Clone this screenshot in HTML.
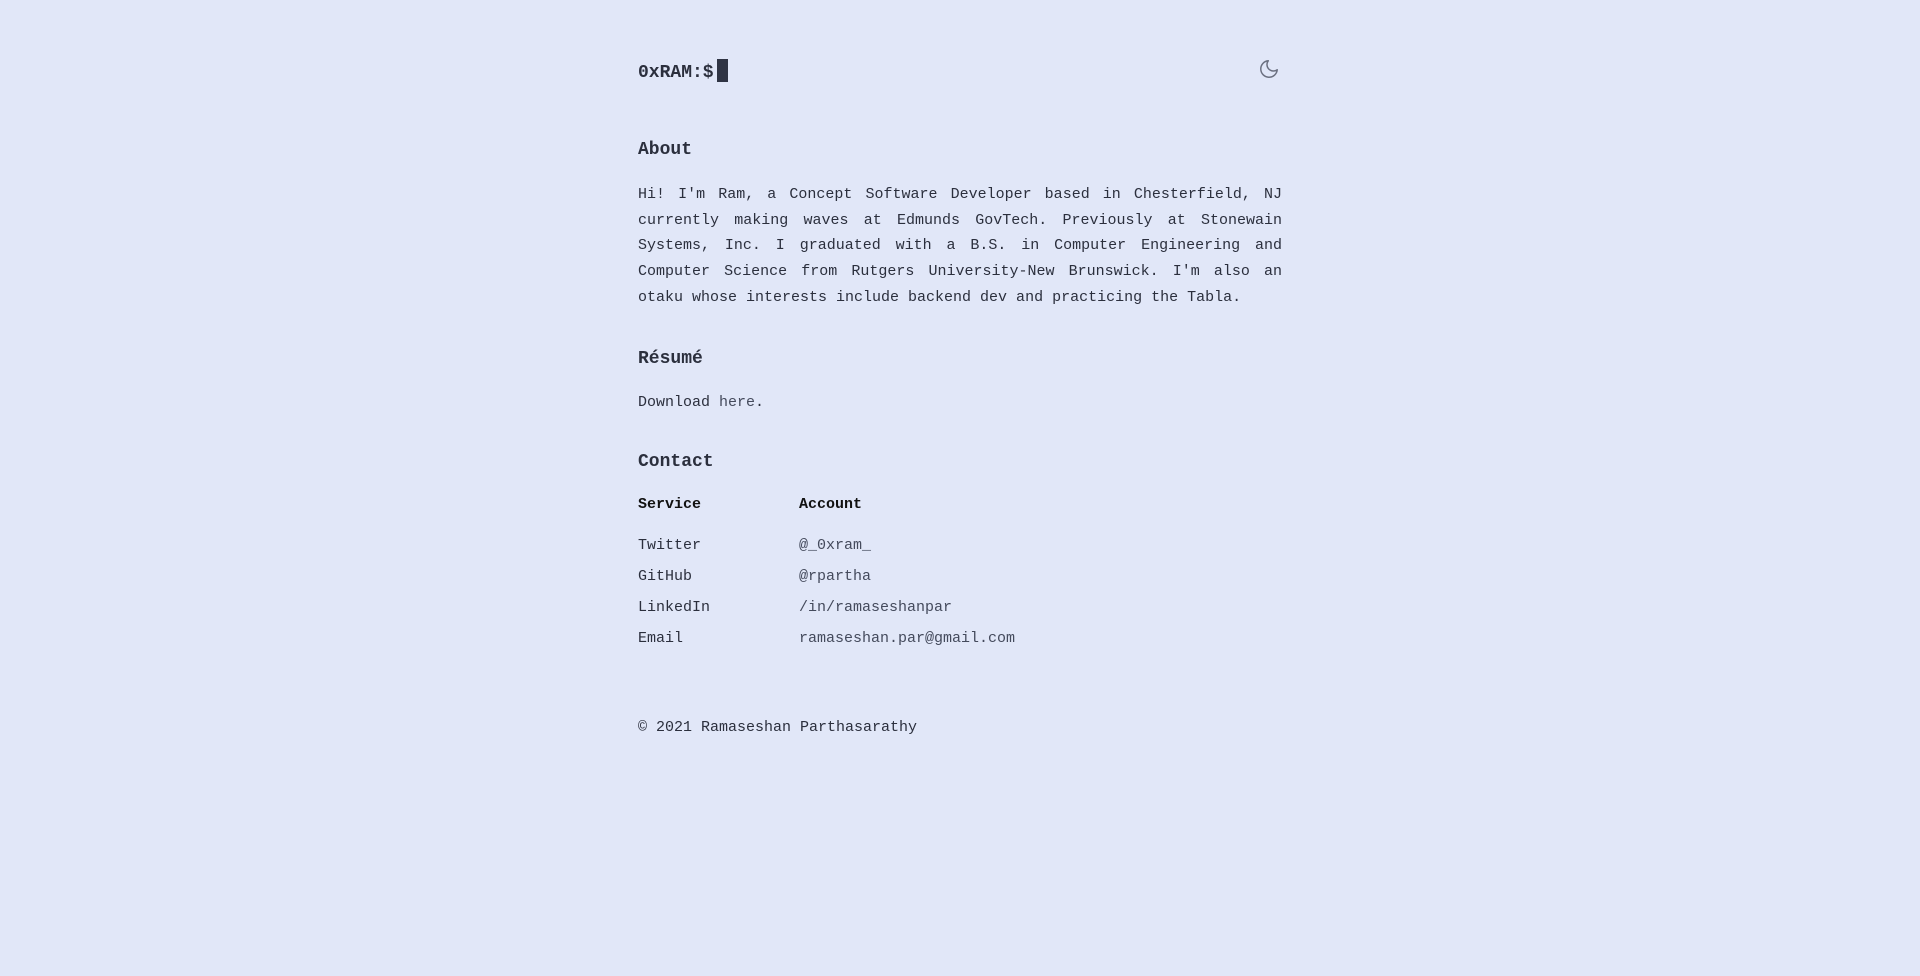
<!DOCTYPE html>
<html><head><meta charset="utf-8"><style>
body{margin:0;background:#e1e7f8;color:#2b2f3d;font-family:"Liberation Mono",monospace;font-size:15px;}
.w{position:absolute;left:638px;width:644px;}
.abs{position:absolute;white-space:nowrap;}
h2{margin:0;font-size:18px;font-weight:bold;}
p{margin:0;line-height:25.7px;text-align:justify;}
</style></head><body>
<div class="abs" style="left:638px;top:59px;font-size:18px;font-weight:bold;line-height:22px;">0xRAM:$<span style="display:inline-block;width:11px;height:23px;background:#2f3444;vertical-align:-5px;margin-left:3px"></span></div>
<svg class="abs" style="left:1258px;top:58px" width="22" height="22" viewBox="0 0 24 24" fill="none" stroke="#6b7080" stroke-width="1.6" stroke-linecap="round" stroke-linejoin="round"><path d="M21 12.8A9 9 0 1 1 11.2 3a7 7 0 0 0 9.8 9.8z"/></svg>
<h2 class="abs" style="left:638px;top:140px">About</h2>
<div class="w" style="top:182px"><p>Hi! I'm Ram, a Concept Software Developer based in Chesterfield, NJ currently making waves at Edmunds GovTech. Previously at Stonewain Systems, Inc. I graduated with a B.S. in Computer Engineering and Computer Science from Rutgers University-New Brunswick. I'm also an otaku whose interests include backend dev and practicing the Tabla.</p></div>
<h2 class="abs" style="left:638px;top:349px">Résumé</h2>
<div class="abs" style="left:638px;top:394px">Download <span style="color:#444a5c">here</span>.</div>
<h2 class="abs" style="left:638px;top:452px">Contact</h2>
<div class="abs" style="left:638px;top:496px;font-weight:bold;color:#111">Service</div>
<div class="abs" style="left:799px;top:496px;font-weight:bold;color:#111">Account</div>
<div class="abs" style="left:638px;top:537px">Twitter</div><div class="abs" style="left:799px;top:537px;color:#444a5c">@_0xram_</div>
<div class="abs" style="left:638px;top:568px">GitHub</div><div class="abs" style="left:799px;top:568px;color:#444a5c">@rpartha</div>
<div class="abs" style="left:638px;top:599px">LinkedIn</div><div class="abs" style="left:799px;top:599px;color:#444a5c">/in/ramaseshanpar</div>
<div class="abs" style="left:638px;top:630px">Email</div><div class="abs" style="left:799px;top:630px;color:#444a5c">ramaseshan.par@gmail.com</div>
<div class="abs" style="left:638px;top:719px">© 2021 Ramaseshan Parthasarathy</div>
</body></html>
